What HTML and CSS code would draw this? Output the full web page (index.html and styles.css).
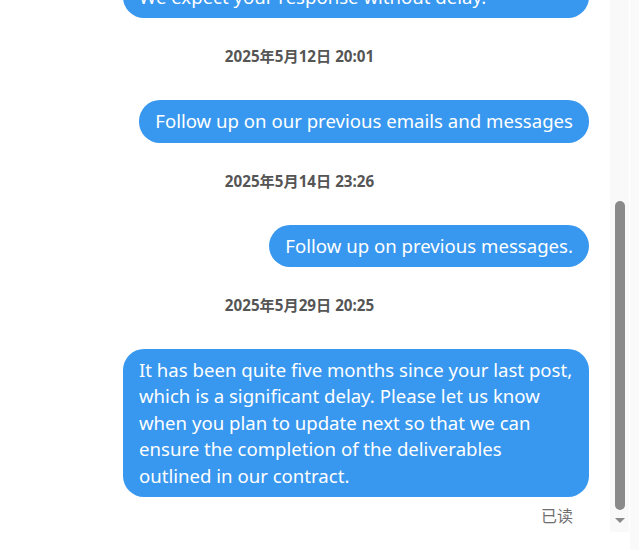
FILE: index.html
```html
<!DOCTYPE html>
<html lang="zh-CN">
<head>
  <meta charset="UTF-8">
  <meta name="viewport" content="width=device-width, initial-scale=1.0">
  <title>消息</title>
  <link rel="stylesheet" href="styles.css">
</head>
<body>
  <div class="window">
    <!-- 聊天记录（column-reverse 让内容停在底部） -->
    <div class="chat">
      <div class="chat-inner">
        <div class="time">2025年4月28日 10:12</div>
        <div class="msg-row">
          <div class="bubble">Any update on the project?</div>
        </div>

        <div class="time">2025年5月8日 09:47</div>
        <div class="msg-row">
          <div class="bubble">We have not received any update from you for a long time. Please confirm the current progress and the expected date.<br>We expect your response without delay.</div>
        </div>

        <div class="time">2025年5月12日 20:01</div>
        <div class="msg-row">
          <div class="bubble">Follow up on our previous emails and messages</div>
        </div>

        <div class="time">2025年5月14日 23:26</div>
        <div class="msg-row">
          <div class="bubble">Follow up on previous messages.</div>
        </div>

        <div class="time">2025年5月29日 20:25</div>
        <div class="msg-row">
          <div class="bubble">It has been quite five months since your last post, which is a significant delay. Please let us know when you plan to update next so that we can ensure the completion of the deliverables outlined in our contract.</div>
        </div>
        <div class="read">已读</div>
      </div>
    </div>

    <!-- 滚动条 -->
    <div class="scrollbar">
      <div class="thumb"></div>
      <div class="arrow-down"></div>
    </div>
  </div>
  <div class="page-edge"></div>
</body>
</html>
```
FILE: styles.css
```css
/* 全体 */
body {
  margin: 0;
  height: 550px;
  display: flex;
  font-family: "Noto Sans", "Noto Sans CJK SC", sans-serif;
  color: #333;
  background: #fff;
}
.window {
  display: flex;
  align-self: flex-start;
  height: 532px;
}

/* 聊天区域 */
.chat {
  width: 610px;
  height: 532px;
  overflow: hidden;
  display: flex;
  flex-direction: column-reverse;
}
.chat-inner {
  padding: 53px 21px 4px 10px;
}

/* 时间 */
.time {
  margin: 28px 0 34px;
  text-align: center;
  font-size: 15.2px;
  font-weight: bold;
  line-height: 20px;
  color: #555;
}

/* 消息气泡 */
.msg-row {
  display: flex;
  justify-content: flex-end;
}
.bubble {
  max-width: 466px;
  box-sizing: border-box;
  padding: 8px 16px;
  background: #3897ee;
  color: #fff;
  font-size: 18.6px;
  line-height: 26.4px;
  border-radius: 21px;
}
.read {
  margin-top: 7px;
  padding-right: 16px;
  text-align: right;
  font-size: 16px;
  line-height: 24px;
  color: #707070;
}

/* 滚动条 */
.scrollbar {
  width: 19px;
  background: #f9f9f9;
  display: flex;
  flex-direction: column;
  justify-content: flex-end;
  align-items: center;
}
.thumb {
  width: 10px;
  height: 309px;
  margin: 0 0 2px 0;
  background: #8a8a8a;
  border-radius: 5px;
}
.arrow-down {
  width: 0;
  height: 0;
  margin: 6px 0 9px;
  border-left: 5px solid transparent;
  border-right: 5px solid transparent;
  border-top: 5px solid #8a8a8a;
}
.page-edge {
  width: 9px;
  margin-left: 1px;
  background: #fafafa;
}
```
